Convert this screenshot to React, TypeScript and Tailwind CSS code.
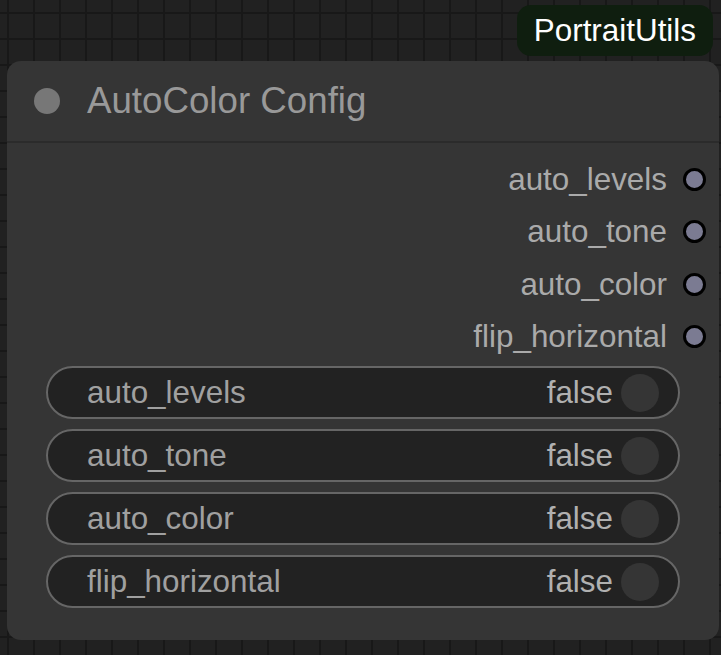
import React from 'react';

const outputs = ['auto_levels', 'auto_tone', 'auto_color', 'flip_horizontal'];

function Toggle({ label }: { label: string }) {
  return (
    <div className="flex h-[53px] items-center rounded-full border-2 border-[#666666] bg-[#222222] pl-[39px] pr-[19px]">
      <span className="flex-1 text-[#a0a0a0]">{label}</span>
      <span className="text-[#b0b0b0]">false</span>
      <span className="ml-[8px] h-[38px] w-[38px] rounded-full bg-[#353535]" />
    </div>
  );
}

export default function App() {
  return (
    <div className="relative h-[655px] w-[721px] overflow-hidden bg-[#212121] bg-[linear-gradient(to_right,#181818_2px,transparent_2px),linear-gradient(to_bottom,#181818_2px,transparent_2px)] bg-[size:26px_26px] bg-[position:7px_12px] pl-[7px] pt-[61px] font-['Liberation_Sans',Arial,sans-serif] text-[31.4px] leading-none">
      {/* node */}
      <div className="flex h-[579px] w-[712px] flex-col rounded-[14px] bg-[#353535]">
        <div className="flex h-[82px] shrink-0 items-center border-b-2 border-[#2b2b2b]">
          <span className="ml-[27px] h-[26px] w-[26px] rounded-full bg-[#777777]" />
          <span className="ml-[27px] text-[36.7px] text-[#999999]">AutoColor Config</span>
        </div>

        <div className="flex flex-col pt-[10px]">
          {outputs.map((name) => (
            <div key={name} className="flex h-[52.5px] items-center justify-end pr-[13px]">
              <span className="text-[#aaaaaa]">{name}</span>
              <span className="ml-[16px] h-[23px] w-[23px] rounded-full border-[3px] border-black bg-[#7b7b92]" />
            </div>
          ))}
        </div>

        <div className="mt-[3px] flex flex-col gap-[10px] pl-[39px] pr-[39px]">
          {outputs.map((name) => (
            <Toggle key={name} label={name} />
          ))}
        </div>
      </div>

      {/* category badge */}
      <div className="absolute right-[8px] top-[5px] flex h-[51px] items-center rounded-[14px] bg-[#0f1e0f] px-[17px] text-white">
        PortraitUtils
      </div>
    </div>
  );
}
